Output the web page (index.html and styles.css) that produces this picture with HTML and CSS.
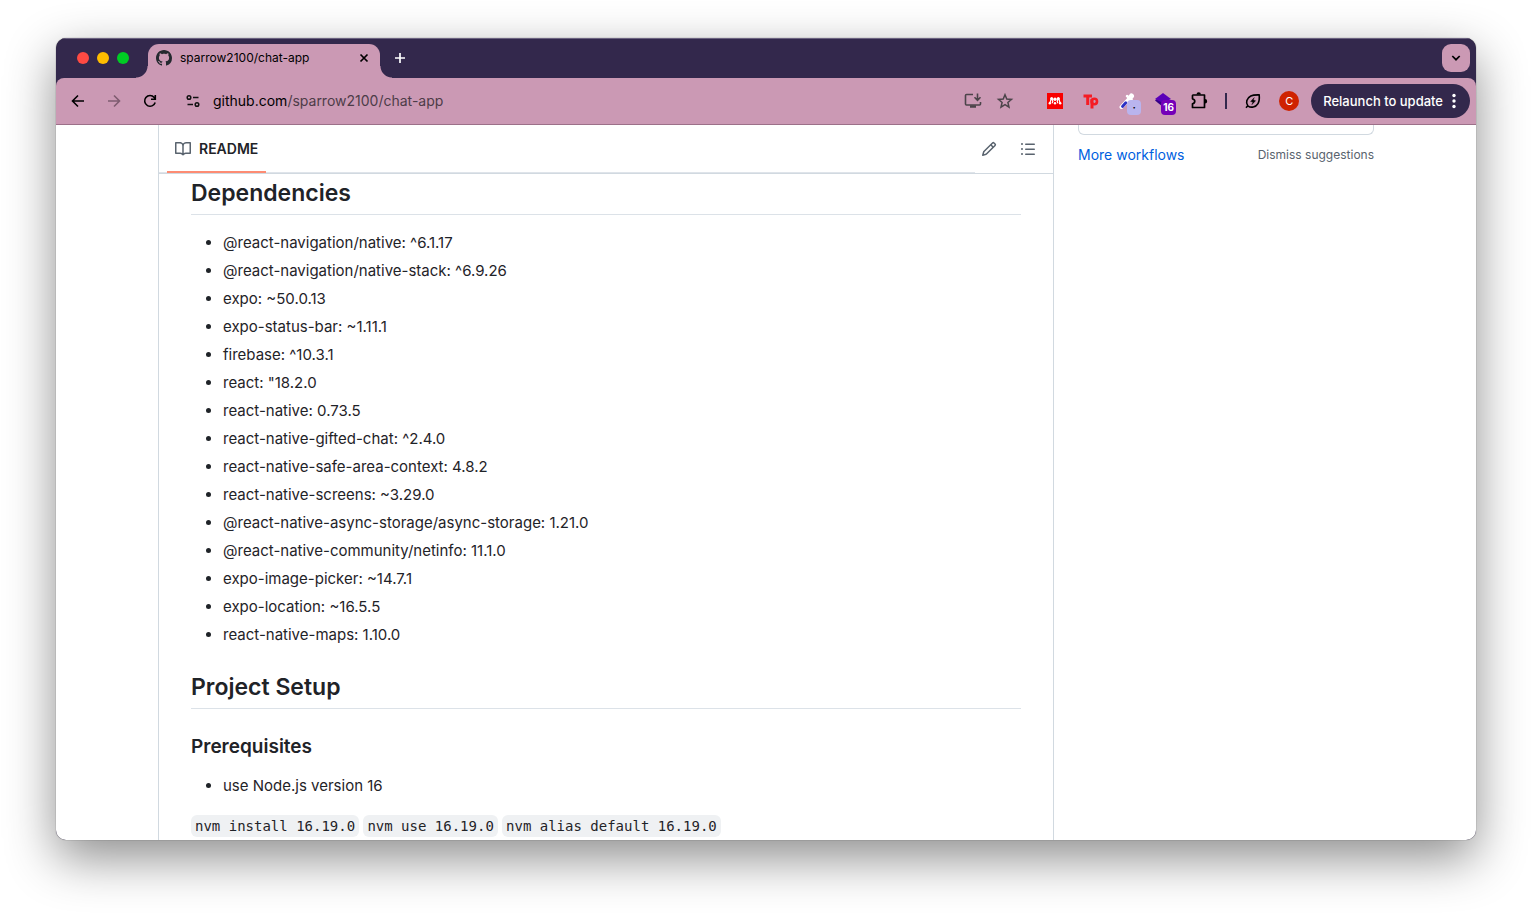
FILE: index.html
```html
<!DOCTYPE html>
<html lang="en">
<head>
<meta charset="utf-8">
<title>sparrow2100/chat-app</title>
<link rel="stylesheet" href="styles.css">
</head>
<body>
<div class="window">
  <header class="tabstrip">
    <div class="lights"><span class="light red"></span><span class="light yellow"></span><span class="light green"></span></div>
    <div class="tab">
      <svg class="favicon" width="16" height="16" viewBox="0 0 16 16" fill="#24292f"><path d="M8 0C3.58 0 0 3.58 0 8c0 3.54 2.29 6.53 5.47 7.59.4.07.55-.17.55-.38 0-.19-.01-.82-.01-1.49-2.01.37-2.53-.49-2.69-.94-.09-.23-.48-.94-.82-1.13-.28-.15-.68-.52-.01-.53.63-.01 1.08.58 1.23.82.72 1.21 1.87.87 2.33.66.07-.52.28-.87.51-1.07-1.78-.2-3.64-.89-3.64-3.95 0-.87.31-1.59.82-2.15-.08-.2-.36-1.02.08-2.12 0 0 .67-.21 2.2.82.64-.18 1.32-.27 2-.27s1.36.09 2 .27c1.53-1.04 2.2-.82 2.2-.82.44 1.1.16 1.92.08 2.12.51.56.82 1.27.82 2.15 0 3.07-1.87 3.75-3.65 3.95.29.25.54.73.54 1.48 0 1.07-.01 1.93-.01 2.2 0 .21.15.46.55.38A8.01 8.01 0 0 0 16 8c0-4.42-3.58-8-8-8z"/></svg>
      <span class="tab-title">sparrow2100/chat-app</span>
      <button class="plain" aria-label="Close tab"><svg width="16" height="16" viewBox="0 0 16 16" fill="none" stroke="#000" stroke-width="1.7"><path d="M4.5 4.5l7 7M11.5 4.5l-7 7"/></svg></button>
    </div>
    <button class="plain new-tab" aria-label="New tab"><svg width="16" height="16" viewBox="0 0 16 16" fill="none" stroke="#fff" stroke-width="1.7"><path d="M8 3v10M3 8h10"/></svg></button>
    <button class="plain search-tabs" aria-label="Search tabs"><svg width="12" height="12" viewBox="0 0 12 12" fill="none" stroke="#000" stroke-width="1.7"><path d="M2.300 4L6 7.700 9.700 4"/></svg></button>
  </header>

  <nav class="toolbar">
    <button class="plain tool" aria-label="Back"><svg width="16" height="16" viewBox="0 0 16 16" fill="none" stroke="#000" stroke-width="1.6"><path d="M14 8H3M8 2.500L2.500 8 8 13.500"/></svg></button>
    <button class="plain tool" aria-label="Forward"><svg width="16" height="16" viewBox="0 0 16 16" fill="none" stroke="#7f5c70" stroke-width="1.6"><path d="M2 8h11M8 2.500L13.500 8 8 13.500"/></svg></button>
    <button class="plain tool" aria-label="Reload"><svg width="16" height="16" viewBox="0 0 16 16" fill="none" stroke="#000" stroke-width="1.600"><path d="M13.200 9.500A5.400 5.400 0 1 1 12.200 4.400L13.300 6M13.300 2v4.300H9"/></svg></button>
    <button class="plain site-info" aria-label="Site information"><svg width="16" height="16" viewBox="0 0 16 16" fill="none" stroke="#111" stroke-width="1.500"><circle cx="4" cy="4.500" r="1.800"/><path d="M8 4.500h5.500M2.500 11.500H8"/><circle cx="12" cy="11.500" r="1.800"/></svg></button>
    <div class="url" role="textbox" contenteditable="true" spellcheck="false" aria-label="Address"><span class="host">github.com</span>/sparrow2100/chat-app</div>
    <button class="plain page-action" aria-label="Install page"><svg width="18" height="18" viewBox="0 0 18 18" fill="none" stroke="#4c444a" stroke-width="1.600"><path d="M9 2.500H2.500a1 1 0 0 0-1 1v8.500a1 1 0 0 0 1 1h13a1 1 0 0 0 1-1V10M13.500 1.500V8M10.500 5.300l3 3 3-3"/><path d="M6 14.500h6" stroke-width="2.500"/></svg></button>
    <button class="plain page-action" aria-label="Bookmark this tab"><svg width="18" height="18" viewBox="0 0 18 18" fill="none" stroke="#4c444a" stroke-width="1.500"><path d="M9 2.700l1.800 4.300 4.700.4-3.600 3.100 1.100 4.600L9 12.700l-4 2.400 1.100-4.600L2.500 7.400l4.700-.4z"/></svg></button>
    <div class="extensions">
      <button class="plain tool" aria-label="Mendeley"><svg width="16" height="16" viewBox="0 0 16 16"><path fill="#f90000" d="M0 0h16v16H0z"/><g fill="#fff"><circle cx="4.700" cy="5.600" r="1.500"/><circle cx="11.300" cy="5.600" r="1.500"/><circle cx="8" cy="6.300" r="1.700"/><circle cx="2.800" cy="10.300" r="1.200"/><circle cx="8" cy="10.300" r="1.200"/><circle cx="13.200" cy="10.300" r="1.200"/></g><path d="M4.300 5.500L2.800 10.200M11.700 5.500l1.500 4.700M5 5.800l.8 2.700-.7 1.800M11 5.800l-.8 2.700.7 1.800" fill="none" stroke="#fff" stroke-width="1.200"/></svg></button>
      <button class="plain tool" aria-label="Tp"><svg width="16" height="16" viewBox="0 0 16 16" fill="none" stroke="#f51c24" stroke-width="3"><path d="M.5 3H9M4.700 3v9M9 6v9.500"/><circle cx="11.300" cy="8.500" r="2.700" stroke-width="2.600"/></svg></button>
      <button class="plain tool" aria-label="Color picker"><svg width="16" height="16" viewBox="0 0 16 16" fill="none"><path d="M10 6L2.500 14" stroke="#fff" stroke-width="4" stroke-linecap="round"/><path d="M6.800 9.800L3.500 13.500" stroke="#2b30c5" stroke-width="2.800" stroke-linecap="round"/><path d="M8 3l5 4.500" stroke="#fff" stroke-width="2.500" stroke-linecap="round"/><path d="M11 5l1.500-2" stroke="#fff" stroke-width="5" stroke-linecap="round"/></svg><span class="badge pale">·</span></button>
      <button class="plain tool" aria-label="Layers, 16 items"><svg width="16" height="16" viewBox="0 0 16 16"><path fill="#330086" d="M0 7.500l2.500-2L8 9v5z"/><path fill="#5a00b8" d="M8 0l8 6-8 4-8-4z"/></svg><span class="badge violet">16</span></button>
      <button class="plain tool" aria-label="Extensions"><svg width="18" height="18" viewBox="0 0 18 18" fill="none" stroke="#000" stroke-width="1.700" stroke-linejoin="round"><path d="M3 3h11.500v12.500H2.500v-3.700c3-.6 3-4.400 0-5V3.500z"/><path fill="#000" stroke="none" d="M6.500 2.500a2.200 2.200 0 0 1 4.400 0zM15 7a2.200 2.200 0 0 1 0 4.400z"/></svg></button>
    </div>
    <span class="divider"></span>
    <button class="plain tool" aria-label="Energy saver"><svg width="18" height="18" viewBox="0 0 18 18" fill="none" stroke="#000" stroke-width="1.600" stroke-linejoin="round"><path d="M3.800 13.800C1.300 10.500 2.800 6 6.800 4 9.300 2.800 12 2.900 15.200 2.800c.3 3.500.3 6.300-1.200 8.800-2.300 3.800-7 4.600-10.200 2.200zM2 15.800l1.800-2"/><path d="M10.300 5.500L6.500 9.500l2.300.6-1 2.700 3.900-4.100-2.300-.6z" fill="#000" stroke-width=".3"/></svg></button>
    <button class="plain tool" aria-label="Profile"><span class="avatar">C</span></button>
    <button class="plain relaunch">Relaunch to update<svg width="4" height="16" viewBox="0 0 4 16" fill="#fff"><circle cx="2" cy="2.500" r="1.700"/><circle cx="2" cy="8" r="1.700"/><circle cx="2" cy="13.500" r="1.700"/></svg></button>
  </nav>

  <main class="page">
    <div class="container">
      <section class="readme">
        <div class="readme-head">
          <div class="readme-tabs">
            <a class="readme-tab" href="#readme"><svg width="16" height="16" viewBox="0 0 16 16" fill="#59636e"><path d="M0 1.750A.75.75 0 0 1 .75 1h4.253c1.227 0 2.317.59 3 1.501A3.743 3.743 0 0 1 11.006 1h4.245a.75.75 0 0 1 .75.75v10.500a.75.75 0 0 1-.75.75h-4.507a2.250 2.250 0 0 0-1.591.659l-.622.621a.75.75 0 0 1-1.060 0l-.622-.621A2.250 2.250 0 0 0 5.258 13H.75a.75.75 0 0 1-.75-.75Zm7.251 10.324.004-5.073-.002-2.253A2.250 2.250 0 0 0 5.003 2.500H1.500v9h3.757a3.750 3.750 0 0 1 1.994.574ZM8.755 4.750l-.004 7.322a3.752 3.752 0 0 1 1.992-.572H14.500v-9h-3.495a2.250 2.250 0 0 0-2.250 2.250Z"/></svg>README</a>
          </div>
          <div class="readme-actions">
            <button class="plain" aria-label="Edit file"><svg width="16" height="16" viewBox="0 0 16 16" fill="#59636e"><path d="M11.013 1.427a1.750 1.750 0 0 1 2.474 0l1.086 1.086a1.750 1.750 0 0 1 0 2.474l-8.610 8.610c-.21.21-.47.364-.756.445l-3.251.93a.75.75 0 0 1-.927-.928l.929-3.250c.081-.286.235-.547.445-.758l8.610-8.610Zm.176 4.823L9.750 4.810l-6.286 6.287a.253.253 0 0 0-.064.108l-.558 1.953 1.953-.558a.253.253 0 0 0 .108-.064Zm1.238-3.763a.25.25 0 0 0-.354 0L10.811 3.750l1.439 1.440 1.263-1.263a.25.25 0 0 0 0-.354Z"/></svg></button>
            <button class="plain" aria-label="Outline"><svg width="16" height="16" viewBox="0 0 16 16" fill="#59636e"><path d="M5.750 2.500h8.500a.75.75 0 0 1 0 1.500h-8.500a.75.75 0 0 1 0-1.500Zm0 5h8.500a.75.75 0 0 1 0 1.500h-8.500a.75.75 0 0 1 0-1.500Zm0 5h8.500a.75.75 0 0 1 0 1.500h-8.500a.75.75 0 0 1 0-1.500ZM2 14a1 1 0 1 1 0-2 1 1 0 0 1 0 2Zm1-6a1 1 0 1 1-2 0 1 1 0 0 1 2 0ZM2 4a1 1 0 1 1 0-2 1 1 0 0 1 0 2Z"/></svg></button>
          </div>
        </div>
        <article class="markdown" id="readme">
          <h2>Dependencies</h2>
          <ul class="deps">
            <li>@react-navigation/native: ^6.1.17</li>
            <li>@react-navigation/native-stack: ^6.9.26</li>
            <li>expo: ~50.0.13</li>
            <li>expo-status-bar: ~1.11.1</li>
            <li>firebase: ^10.3.1</li>
            <li>react: "18.2.0</li>
            <li>react-native: 0.73.5</li>
            <li>react-native-gifted-chat: ^2.4.0</li>
            <li>react-native-safe-area-context: 4.8.2</li>
            <li>react-native-screens: ~3.29.0</li>
            <li>@react-native-async-storage/async-storage: 1.21.0</li>
            <li>@react-native-community/netinfo: 11.1.0</li>
            <li>expo-image-picker: ~14.7.1</li>
            <li>expo-location: ~16.5.5</li>
            <li>react-native-maps: 1.10.0</li>
          </ul>
          <h2>Project Setup</h2>
          <h3>Prerequisites</h3>
          <ul>
            <li>use Node.js version 16</li>
          </ul>
          <p><code>nvm install 16.19.0</code> <code>nvm use 16.19.0</code> <code>nvm alias default 16.19.0</code></p>
        </article>
      </section>
      <aside class="sidebar">
        <div class="card-end"></div>
        <div class="side-links"><a class="more" href="#workflows">More workflows</a><button class="plain dismiss">Dismiss suggestions</button></div>
      </aside>
    </div>
  </main>
</div>
</body>
</html>
```
FILE: styles.css
```css
* { box-sizing: border-box; }

body {
  margin: 0;
  height: 100vh;
  padding: 38px 56px 74px;
  display: flex;
  background: #fff;
  font-family: Inter, "Liberation Sans", sans-serif;
  color: #1f2328;
}

a { text-decoration: none; }

svg { display: block; flex: none; }

.plain {
  border: 0;
  padding: 0;
  background: none;
  font: inherit;
  color: inherit;
  display: flex;
  align-items: center;
  justify-content: center;
}

.window {
  flex: 1;
  min-width: 0;
  display: flex;
  flex-direction: column;
  overflow: hidden;
  border-radius: 10px;
  background: #33284c;
  box-shadow: 0 0 1px rgba(0, 0, 0, .7), 0 18px 50px rgba(0, 0, 0, .45);
}

.tabstrip {
  height: 40px;
  flex: none;
  display: flex;
  padding: 5px 6px 0 21px;
  border-top: 1px solid #6b6280;
}

.lights {
  display: flex;
  gap: 8px;
  align-items: center;
  height: 28px;
  margin-right: 19px;
}

.light { width: 12px; height: 12px; border-radius: 50%; }
.red { background: #ff4a43; }
.yellow { background: #ffbd00; }
.green { background: #00cc24; }

.tab {
  position: relative;
  width: 232px;
  display: flex;
  align-items: center;
  padding: 0 8px 6px;
  border-radius: 11px 11px 0 0;
  background: #cb99b4;
  font-size: 12px;
  color: #000;
}

.tab::before,
.tab::after {
  content: "";
  position: absolute;
  bottom: 0;
  width: 12px;
  height: 12px;
}

.tab::before { right: 100%; background: radial-gradient(circle at 0 0, transparent 11px, #cb99b4 12px); }
.tab::after { left: 100%; background: radial-gradient(circle at 100% 0, transparent 11px, #cb99b4 12px); }

.tab-title { flex: 1; margin-left: 8px; padding-bottom: 1px; }

.new-tab { width: 28px; height: 28px; margin-left: 6px; }

.search-tabs {
  width: 28px;
  height: 28px;
  margin-left: auto;
  border-radius: 9px;
  background: #cb99b4;
}

.toolbar {
  height: 47px;
  flex: none;
  display: flex;
  align-items: center;
  padding: 0 6px 0 4px;
  border-radius: 8px 8px 0 0;
  border-bottom: 1px solid #9c7089;
  background: #cb99b4;
}

.tool { position: relative; width: 36px; height: 36px; }
.site-info { width: 24px; height: 24px; margin: 0 8px 0 13px; }
.url { flex: 1; font-size: 14px; line-height: 20px; color: #4d3c48; outline: none; white-space: nowrap; }
.host { color: #000; }
.page-action { width: 32px; height: 32px; }
.extensions { display: flex; margin-left: 16px; }

.badge {
  position: absolute;
  left: 16px;
  top: 17px;
  min-width: 14px;
  height: 15px;
  padding: 0 2px;
  border-radius: 4px;
  font-size: 10px;
  line-height: 15px;
  font-weight: 700;
  text-align: center;
}

.pale { left: 18px; background: #b9b4ee; color: #000; }
.violet { background: #7400b8; color: #fff; }

.divider { width: 2px; height: 16px; margin: 0 8px; background: #33284c; }

.avatar {
  width: 20px;
  height: 20px;
  border-radius: 50%;
  background: #cf2200;
  color: #fff;
  font-size: 11px;
  line-height: 20px;
}

.relaunch {
  height: 34px;
  margin-left: 4px;
  padding: 0 14px 0 12px;
  gap: 9px;
  border-radius: 17px;
  background: #33284c;
  color: #fff;
  font-size: 13px;
  font-weight: 500;
  white-space: nowrap;
}

.page { flex: 1; min-height: 0; overflow: hidden; background: #fff; }

.container {
  max-width: 1280px;
  margin: 0 auto;
  padding: 0 32px;
  display: flex;
  gap: 24px;
}

.readme { flex: 1; min-width: 0; border: solid #d1d9e0; border-width: 0 1px; }

.readme-head {
  height: 49px;
  display: flex;
  border-bottom: 1px solid #d1d9e0;
}

.readme-tabs {
  flex: 1;
  display: flex;
  padding-left: 8px;
  border-bottom: 1px solid #dfe4ea;
}

.readme-tab {
  display: flex;
  align-items: center;
  gap: 8px;
  padding: 1px 8px 0;
  margin-bottom: -1px;
  border-bottom: 2px solid #fd8c73;
  font-size: 14px;
  font-weight: 600;
  color: #1f2328;
}

.readme-actions { display: flex; gap: 23px; padding: 0 17px 0 6px; }

.markdown { padding: 3px 32px 32px; font-size: 15px; line-height: 24px; }

.markdown h2 {
  margin: 24px 0 16px;
  padding: 1px 0 6px;
  border-bottom: 1px solid #dce2e8;
  font-size: 23px;
  line-height: 30px;
  font-weight: 600;
}

.markdown h2:first-child { margin-top: 0; }
.markdown h3 { margin: 25px 0 15px; font-size: 19px; line-height: 25px; font-weight: 600; }
.markdown ul { margin: 0 0 16px; padding-left: 32px; }
.markdown li + li { margin-top: 4px; }
.markdown p { margin: 0; white-space: nowrap; }

.markdown code {
  padding: 3px 4px;
  border-radius: 6px;
  background: #eff1f3;
  font-family: "DejaVu Sans Mono", monospace;
  font-size: 14px;
}

.sidebar { width: 296px; flex: none; }
.card-end { height: 10px; border: 1px solid #d1d9e0; border-top: 0; border-radius: 0 0 6px 6px; }

.side-links {
  display: flex;
  align-items: center;
  justify-content: space-between;
  margin-top: 10px;
  line-height: 20px;
}

.more { font-size: 14px; color: #005fe0; }
.dismiss { font-size: 12px; color: #59636e; }
```
